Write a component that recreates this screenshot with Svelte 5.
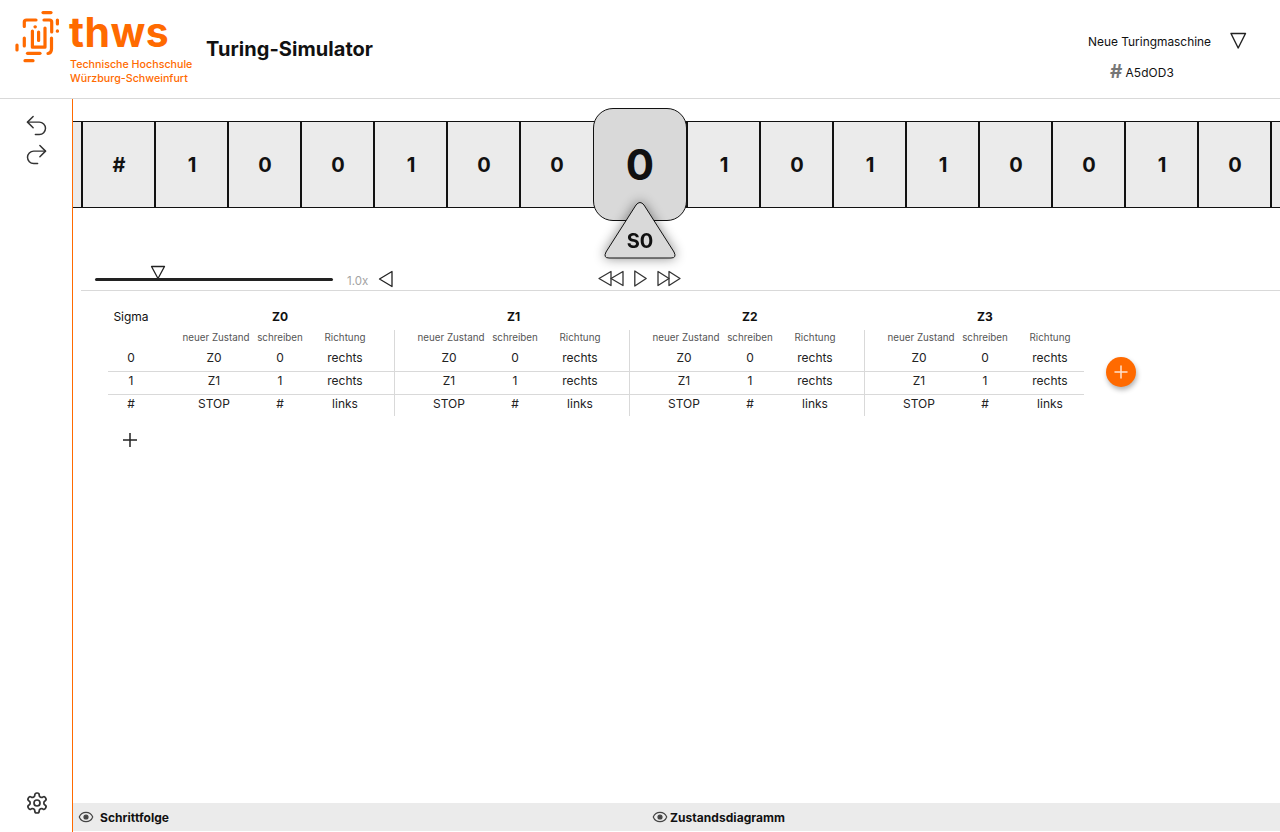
<script>
  const left = ['#', '1', '0', '0', '1', '0', '0'];
  const right = ['1', '0', '1', '1', '0', '0', '1', '0'];
  const states = ['Z0', 'Z1', 'Z2', 'Z3'];
  const rows = [
    { sigma: '0', state: 'Z0', write: '0', dir: 'rechts' },
    { sigma: '1', state: 'Z1', write: '1', dir: 'rechts' },
    { sigma: '#', state: 'STOP', write: '#', dir: 'links' }
  ];
</script>

<div class="app">
  <header class="header">
    <div class="logo">
      <svg class="mark" viewBox="0 0 46 54" width="46" height="54" fill="none" stroke="#ff6a00" stroke-width="3.2" stroke-linecap="round" stroke-linejoin="round">
        <path d="M28 1.6H36" />
        <path d="M42.4 9V13" />
        <path d="M42.4 19.8V20.2" />
        <path d="M9.3 15.5V11Q9.3 9 11.5 9H21" />
        <path d="M29 9H34.5Q36.7 9 36.7 11V21" />
        <path d="M9.3 27V35" />
        <path d="M36.5 27V38Q36.5 42 33 42.5" />
        <path d="M12.5 42.3H25" />
        <path d="M2 34V39" />
        <path d="M10 49.7H18" />
        <path d="M20 15.8H20.3" />
        <path d="M17.4 20V36.2H30V17" />
        <path d="M23.6 21V29.5" />
      </svg>
      <div class="wordmark">
        <div class="thws">thws</div>
        <div class="school">Technische Hochschule</div>
        <div class="school">Würzburg-Schweinfurt</div>
      </div>
    </div>
    <h1 class="title">Turing-Simulator</h1>
    <div class="machine">
      <div class="machine-top">
        <span>Neue Turingmaschine</span>
        <svg width="18" height="18" viewBox="0 0 18 18" fill="none" stroke="#222" stroke-width="1.4" stroke-linejoin="round"><path d="M2 1.5H16.5L9.2 16Z" /></svg>
      </div>
      <div class="machine-id"><span class="hash">#</span><span>A5dOD3</span></div>
    </div>
  </header>

  <div class="body">
    <aside class="sidebar">
      <svg class="history" viewBox="0 0 24 24" fill="none" stroke="#333" stroke-width="1.3" stroke-linecap="round" stroke-linejoin="round"><path d="M9 14 4 9l5-5" /><path d="M4 9h10.5a5.5 5.5 0 0 1 5.5 5.5a5.5 5.5 0 0 1-5.5 5.5H11" /></svg>
      <svg class="history" viewBox="0 0 24 24" fill="none" stroke="#333" stroke-width="1.3" stroke-linecap="round" stroke-linejoin="round"><path d="m15 14 5-5-5-5" /><path d="M20 9H9.5A5.5 5.5 0 0 0 4 14.5A5.5 5.5 0 0 0 9.5 20H13" /></svg>
      <svg class="gear" viewBox="0 0 24 24" fill="none" stroke="#333" stroke-width="1.7" stroke-linecap="round" stroke-linejoin="round"><path d="M12.22 2h-.44a2 2 0 0 0-2 2v.18a2 2 0 0 1-1 1.73l-.43.25a2 2 0 0 1-2 0l-.15-.08a2 2 0 0 0-2.73.73l-.22.38a2 2 0 0 0 .73 2.73l.15.1a2 2 0 0 1 1 1.72v.51a2 2 0 0 1-1 1.74l-.15.09a2 2 0 0 0-.73 2.73l.22.38a2 2 0 0 0 2.73.73l.15-.08a2 2 0 0 1 2 0l.43.25a2 2 0 0 1 1 1.73V20a2 2 0 0 0 2 2h.44a2 2 0 0 0 2-2v-.18a2 2 0 0 1 1-1.73l.43-.25a2 2 0 0 1 2 0l.15.08a2 2 0 0 0 2.73-.73l.22-.39a2 2 0 0 0-.73-2.73l-.15-.08a2 2 0 0 1-1-1.74v-.5a2 2 0 0 1 1-1.74l.15-.09a2 2 0 0 0 .73-2.73l-.22-.38a2 2 0 0 0-2.73-.73l-.15.08a2 2 0 0 1-2 0l-.43-.25a2 2 0 0 1-1-1.73V4a2 2 0 0 0-2-2z" /><circle cx="12" cy="12" r="3" /></svg>
    </aside>

    <main class="main">
      <div class="content">
        <div class="tape">
          <div class="stub"></div>
          {#each left as c}<div class="cell">{c}</div>{/each}
          <div class="head">
            0
            <div class="pointer">
              <svg viewBox="0 0 74 58" width="74" height="58"><path d="M33 4L3 51Q0 57 6 57H68Q74 57 71 51L41 4Q37 -1 33 4Z" fill="#d9d9d9" stroke="#111" stroke-width="1" /></svg>
              <span>S0</span>
            </div>
          </div>
          {#each right as c}<div class="cell">{c}</div>{/each}
          <div class="cell tail"></div>
        </div>

        <div class="controls">
          <div class="slider">
            <svg class="thumb" width="16" height="15" viewBox="0 0 16 15" fill="#fff" stroke="#222" stroke-width="1.3" stroke-linejoin="round"><path d="M1.5 1.5H14.5L8 13.5Z" /></svg>
          </div>
          <span class="speed">1.0x</span>
          <svg class="speed-btn" width="16" height="18" viewBox="0 0 16 18" fill="none" stroke="#222" stroke-width="1.3" stroke-linejoin="round"><path d="M14 1.5V16.5L1.5 9Z" /></svg>
          <div class="transport">
            <svg width="26" height="17" viewBox="0 0 26 17" fill="none" stroke="#333" stroke-width="1.3" stroke-linejoin="round"><path d="M13 1.5V15.5L1 8.5Z" /><path d="M25 1.5V15.5L13 8.5Z" /></svg>
            <svg width="13" height="17" viewBox="0 0 13 17" fill="none" stroke="#333" stroke-width="1.3" stroke-linejoin="round"><path d="M0.8 1V16L12.2 8.5Z" /></svg>
            <svg width="24" height="17" viewBox="0 0 24 17" fill="none" stroke="#333" stroke-width="1.3" stroke-linejoin="round"><path d="M1 1.5V15.5L12 8.5Z" /><path d="M12 1.5V15.5L23 8.5Z" /></svg>
          </div>
        </div>

        <div class="divider"></div>

        <div class="table-wrap">
          <div class="table">
            <div class="line titles">
              <div class="sigma-head">Sigma</div>
              {#each states as s}<div class="group-title">{s}</div>{/each}
            </div>
            <div class="line subs">
              <div></div>
              {#each states as s}
                <div class="group">
                  <span>neuer Zustand</span><span>schreiben</span><span class="dir">Richtung</span>
                </div>
              {/each}
            </div>
            {#each rows as r, i}
              <div class="line data" class:last={i === rows.length - 1}>
                <div class="sigma">{r.sigma}</div>
                {#each states as s}
                  <div class="group">
                    <span class="state">{r.state}</span><span>{r.write}</span><span class="dir">{r.dir}</span>
                  </div>
                {/each}
              </div>
            {/each}
          </div>
          <button class="add-state" aria-label="Zustand hinzufügen">
            <svg width="16" height="16" viewBox="0 0 16 16" stroke="#ffe3cf" stroke-width="1.5" stroke-linecap="round"><path d="M8 2V14M2 8H14" /></svg>
          </button>
        </div>

        <button class="add-row" aria-label="Zeile hinzufügen">
          <svg width="16" height="16" viewBox="0 0 16 16" stroke="#222" stroke-width="1.5"><path d="M8 1V15M1 8H15" /></svg>
        </button>
      </div>

      <footer class="footer">
        <div class="foot-item steps">
          <svg viewBox="0 0 24 24" width="16" height="16" fill="none" stroke="#444" stroke-width="1.8" stroke-linecap="round" stroke-linejoin="round"><path d="M2.062 12.348a1 1 0 0 1 0-.696 10.75 10.75 0 0 1 19.876 0 1 1 0 0 1 0 .696 10.75 10.75 0 0 1-19.876 0" /><circle cx="12" cy="12" r="3" fill="#444" /></svg>
          <span>Schrittfolge</span>
        </div>
        <div class="foot-item">
          <svg viewBox="0 0 24 24" width="16" height="16" fill="none" stroke="#444" stroke-width="1.8" stroke-linecap="round" stroke-linejoin="round"><path d="M2.062 12.348a1 1 0 0 1 0-.696 10.75 10.75 0 0 1 19.876 0 1 1 0 0 1 0 .696 10.75 10.75 0 0 1-19.876 0" /><circle cx="12" cy="12" r="3" fill="#444" /></svg>
          <span>Zustandsdiagramm</span>
        </div>
      </footer>
    </main>
  </div>
</div>

<style>
  :global(body) {
    margin: 0;
    background: #fff;
    overflow: hidden;
  }

  .app {
    width: 1280px;
    height: 832px;
    display: flex;
    flex-direction: column;
    font-family: Inter, "Liberation Sans", sans-serif;
    color: #111;
  }

  .header {
    height: 98px;
    flex: none;
    border-bottom: 1px solid #d9d9d9;
    display: flex;
    align-items: flex-start;
  }

  .logo {
    display: flex;
    margin: 11px 0 0 15px;
    width: 191px;
    flex: none;
    align-items: flex-start;
  }

  .mark {
    flex: none;
  }

  .wordmark {
    margin-left: 8px;
    color: #ff6a00;
    margin-top: -1px;
  }

  .thws {
    font-size: 41px;
    font-weight: 700;
    line-height: 44px;
    letter-spacing: 0.4px;
  }

  .school {
    font-size: 10.7px;
    font-weight: 500;
    line-height: 14px;
    margin-left: 1px;
    white-space: nowrap;
  }

  .thws + .school {
    margin-top: 4px;
  }

  .title {
    margin: 37px 0 0 0;
    font-size: 20px;
    line-height: 24px;
    font-weight: 700;
    letter-spacing: 0.05px;
  }

  .machine {
    margin-left: auto;
    margin-right: 33px;
    margin-top: 32px;
    display: flex;
    flex-direction: column;
    font-size: 11.9px;
  }

  .machine-top {
    display: flex;
    align-items: center;
    gap: 18px;
    height: 18px;
  }

  .machine-id {
    display: flex;
    align-items: center;
    gap: 3px;
    margin: 13px 0 0 22px;
    height: 18px;
  }

  .machine-id span:last-child {
    letter-spacing: 0.15px;
  }

  .hash {
    color: #777;
    font-size: 19px;
    font-weight: 700;
    line-height: 18px;
  }

  .body {
    flex: 1;
    display: flex;
    min-height: 0;
  }

  .sidebar {
    flex: none;
    border-right: 1px solid #ff6a00;
    display: flex;
    flex-direction: column;
    align-items: center;
    padding: 13px 0 17px 1px;
    box-sizing: border-box;
    width: 73px;
    gap: 2px;
  }

  .history {
    width: 27px;
    height: 27px;
  }

  .gear {
    width: 24px;
    height: 24px;
    margin-top: auto;
  }

  .main {
    flex: 1;
    min-width: 0;
    display: flex;
    flex-direction: column;
  }

  .content {
    flex: 1;
    min-height: 0;
    padding-top: 22px;
  }

  .tape {
    height: 87px;
    box-sizing: border-box;
    border-top: 1px solid #111;
    border-bottom: 1px solid #111;
    background: #ebebeb;
    display: flex;
  }

  .stub {
    width: 8px;
    flex: none;
  }

  .cell {
    width: 73px;
    flex: none;
    box-sizing: border-box;
    border-left: 2px solid #111;
    padding-left: 1px;
    display: flex;
    align-items: center;
    justify-content: center;
    font-size: 20px;
    font-weight: 700;
  }

  .tail {
    flex: 1;
    width: auto;
  }

  .head {
    width: 94px;
    height: 113px;
    flex: none;
    box-sizing: border-box;
    margin: -14px -1px -14px 1px;
    border: 1px solid #111;
    border-radius: 20px;
    background: #d9d9d9;
    display: flex;
    align-items: center;
    justify-content: center;
    font-size: 42px;
    font-weight: 700;
    position: relative;
    z-index: 1;
  }

  .pointer {
    position: absolute;
    left: 9px;
    top: 92px;
    width: 74px;
    height: 58px;
    filter: drop-shadow(0 0 6px rgba(0, 0, 0, 0.45));
  }

  .pointer svg {
    display: block;
  }

  .pointer span {
    position: absolute;
    left: 0;
    right: 0;
    top: 28px;
    text-align: center;
    font-size: 20px;
    line-height: 24px;
    font-weight: 700;
  }

  .controls {
    display: flex;
    align-items: flex-end;
    margin: 57px 0 0 22px;
    height: 25px;
  }

  .slider {
    width: 238px;
    height: 3px;
    border-radius: 2px;
    background: #222;
    position: relative;
    margin-bottom: 9px;
    flex: none;
  }

  .thumb {
    position: absolute;
    left: 55px;
    top: -13px;
  }

  .speed {
    margin-left: 14px;
    width: 31px;
    flex: none;
    font-size: 11.5px;
    line-height: 14px;
    color: #a3a3a3;
    margin-bottom: 2px;
  }

  .speed-btn {
    flex: none;
    margin-bottom: 2px;
  }

  .transport {
    margin-left: 204px;
    display: flex;
    gap: 10px;
    align-items: center;
    margin-bottom: 3px;
  }

  .divider {
    height: 1px;
    background: #d9d9d9;
    margin: 0 0 0 8px;
  }

  .table-wrap {
    display: flex;
    align-items: flex-start;
    margin: 15px 0 0 35px;
  }

  .table {
    width: 976px;
    flex: none;
  }

  .line {
    display: grid;
    grid-template-columns: 52px 235px 235px 235px 219px;
  }

  .titles {
    height: 24px;
    box-sizing: border-box;
    padding-top: 1px;
    align-items: start;
    font-size: 12px;
    line-height: 20px;
  }

  .sigma-head {
    text-align: center;
    padding-right: 6px;
  }

  .group-title {
    font-weight: 700;
    margin-left: 112px;
  }

  .group {
    display: grid;
    grid-template-columns: 86px 42px 78px;
    padding-left: 13px;
    text-align: center;
    border-right: 1px solid #d9d9d9;
    white-space: nowrap;
    justify-items: center;
    box-sizing: border-box;
  }

  .group:last-child {
    border-right: 0;
  }

  .dir {
    padding-left: 10px;
  }

  .subs {
    height: 19px;
    font-size: 9.8px;
    line-height: 16px;
    color: #555;
  }

  .data {
    height: 23px;
    box-sizing: border-box;
    border-bottom: 1px solid #d9d9d9;
    font-size: 12px;
    line-height: 18px;
    color: #222;
  }

  .data.last {
    height: 21px;
    border-bottom: 0;
  }

  .sigma {
    text-align: center;
    padding-right: 6px;
  }

  .state {
    padding-right: 4px;
  }

  .add-state {
    width: 30px;
    height: 30px;
    flex: none;
    margin: 51px 0 0 22px;
    padding: 0;
    border: 0;
    border-radius: 50%;
    background: #ff6a00;
    box-shadow: 1px 3px 5px rgba(0, 0, 0, 0.3);
    display: flex;
    align-items: center;
    justify-content: center;
  }

  .add-row {
    display: block;
    margin: 16px 0 0 49px;
    padding: 0;
    border: 0;
    background: none;
    width: 16px;
    height: 16px;
  }

  .add-row svg,
  .add-state svg {
    display: block;
  }

  .footer {
    height: 28px;
    flex: none;
    background: #ebebeb;
    display: flex;
    align-items: center;
    margin-bottom: 1px;
    font-size: 12px;
    font-weight: 700;
  }

  .foot-item {
    display: flex;
    align-items: center;
    gap: 2px;
  }

  .steps {
    margin-left: 5px;
    width: 574px;
    gap: 5px;
  }

  .foot-item span {
    letter-spacing: 0.05px;
  }

  .steps span {
    margin-left: 1px;
  }
</style>
